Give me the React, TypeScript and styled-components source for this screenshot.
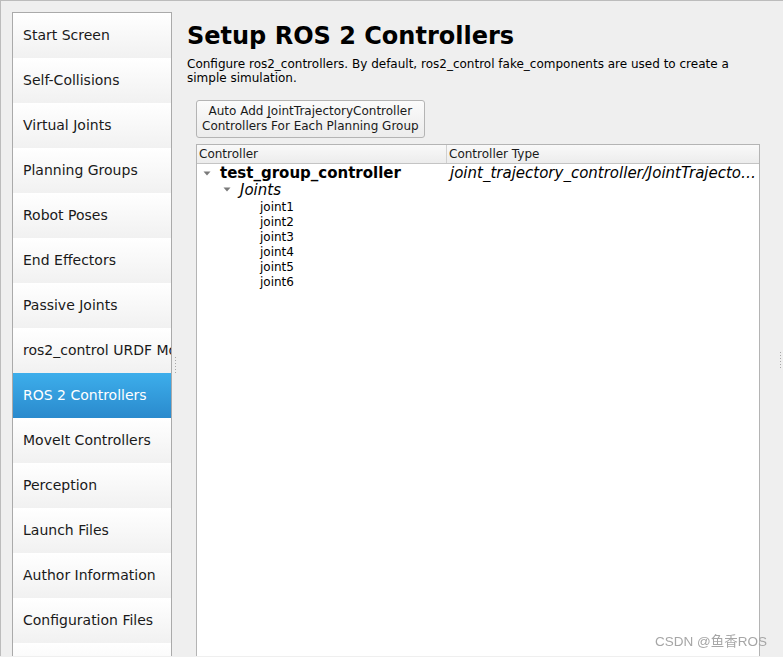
import styled, { createGlobalStyle } from "styled-components";

const GlobalStyle = createGlobalStyle`
  html, body {
    margin: 0;
    padding: 0;
    background: #efefef;
    font-family: "DejaVu Sans", "Noto Sans CJK SC", sans-serif;
    color: #000;
  }
  #root {
    height: 657px;
    overflow: hidden;
  }
`;

const NAV_ITEMS = [
  "Start Screen",
  "Self-Collisions",
  "Virtual Joints",
  "Planning Groups",
  "Robot Poses",
  "End Effectors",
  "Passive Joints",
  "ros2_control URDF Modifications",
  "ROS 2 Controllers",
  "MoveIt Controllers",
  "Perception",
  "Launch Files",
  "Author Information",
  "Configuration Files",
  "",
];

const JOINTS = ["joint1", "joint2", "joint3", "joint4", "joint5", "joint6"];

export default function App() {
  return (
    <>
      <GlobalStyle />
      <Window>
        <Sidebar>
          {NAV_ITEMS.map((item, i) => (
            <NavItem key={i} $active={item === "ROS 2 Controllers"}>
              {item}
            </NavItem>
          ))}
        </Sidebar>
        <Splitter>
          <Dots />
        </Splitter>
        <Main>
          <Title>Setup ROS 2 Controllers</Title>
          <Description>
            Configure ros2_controllers. By default, ros2_control fake_components are used to create a simple
            simulation.
          </Description>
          <AutoButton>
            Auto Add <u>J</u>ointTrajectoryController
            <br />
            Controllers For Each Planning Group
          </AutoButton>
          <Tree>
            <Header>
              <HeaderCell $first>Controller</HeaderCell>
              <HeaderCell>Controller Type</HeaderCell>
            </Header>
            <Row $height={16} $lift={3}>
              <NameCell $level={0}>
                <Arrow />
                <Bold>test_group_controller</Bold>
              </NameCell>
              <TypeCell>joint_trajectory_controller/JointTrajectoryController</TypeCell>
            </Row>
            <Row $height={20} $lift={1}>
              <NameCell $level={1}>
                <Arrow />
                <Italic>Joints</Italic>
              </NameCell>
            </Row>
            {JOINTS.map((joint) => (
              <Row key={joint} $height={15}>
                <NameCell $level={2}>
                  <Leaf>{joint}</Leaf>
                </NameCell>
              </Row>
            ))}
          </Tree>
        </Main>
        <EdgeSplitter>
          <Dots />
        </EdgeSplitter>
      </Window>
      <Watermark>CSDN @鱼香ROS</Watermark>
    </>
  );
}

function Arrow() {
  return (
    <ArrowBox>
      <svg width="8" height="5" viewBox="0 0 8 5">
        <path d="M0.5 0.5 L7.5 0.5 L4 4.5 Z" fill="#7a7a7a" />
      </svg>
    </ArrowBox>
  );
}

const Window = styled.div`
  display: flex;
  height: 656px;
  border-top: 1px solid #bcbcbc;
  border-left: 1px solid #bcbcbc;
  padding-left: 11px;
  box-sizing: border-box;
  overflow: hidden;
`;

const Sidebar = styled.div`
  flex: 0 0 158px;
  margin-top: 11px;
  display: flex;
  flex-direction: column;
  border: 1px solid #aaaaaa;
  border-bottom: none;
  background: #fff;
  overflow: hidden;
`;

const NavItem = styled.div<{ $active?: boolean }>`
  flex: 0 0 45px;
  display: flex;
  align-items: center;
  padding: 0 0 1px 10px;
  box-sizing: border-box;
  font-size: 14px;
  white-space: nowrap;
  overflow: hidden;
  color: ${(p) => (p.$active ? "#fff" : "#1a1a1a")};
  background: ${(p) =>
    p.$active ? "linear-gradient(#3daeeb, #2a8acd)" : "linear-gradient(#ffffff, #f1f1f1)"};
`;

const Splitter = styled.div`
  flex: 0 0 15px;
  display: flex;
  padding: 356px 0 0 3px;
  box-sizing: border-box;
`;

const EdgeSplitter = styled.div`
  flex: 0 0 5px;
  display: flex;
  justify-content: center;
  padding-top: 351px;
  box-sizing: border-box;
`;

const Dots = styled.div`
  width: 1px;
  height: 16px;
  background: repeating-linear-gradient(#a8a8a8 0 1px, transparent 1px 3px);
`;

const Main = styled.div`
  flex: 1;
  min-width: 0;
  padding-top: 20px;
  padding-right: 18px;
  display: flex;
  flex-direction: column;
`;

const Title = styled.h1`
  margin: 0;
  font-size: 24px;
  line-height: 30px;
  font-weight: bold;
`;

const Description = styled.p`
  margin: 6px 0 0;
  font-size: 12px;
  line-height: 14px;
`;

const AutoButton = styled.button`
  align-self: flex-start;
  margin: 15px 0 0 9px;
  padding: 3px 5px;
  font-family: inherit;
  font-size: 12px;
  line-height: 15px;
  color: #1a1a1a;
  background: linear-gradient(#fbfbfb, #ececec);
  border: 1px solid #b4b4b4;
  border-radius: 3px;

  u {
    text-decoration-thickness: 1px;
    text-underline-offset: 2px;
  }
`;

const Tree = styled.div`
  margin: 6px 0 0 9px;
  flex: 1;
  background: #fff;
  border: 1px solid #b4b4b4;
  border-bottom: none;
`;

const Header = styled.div`
  display: grid;
  grid-template-columns: 250px 1fr;
  height: 18px;
  background: linear-gradient(#f9f9f9, #ececec);
  border-bottom: 1px solid #c4c4c4;
`;

const HeaderCell = styled.div<{ $first?: boolean }>`
  display: flex;
  align-items: center;
  padding-left: 2px;
  font-size: 12px;
  color: #1a1a1a;
  border-right: ${(p) => (p.$first ? "1px solid #d0d0d0" : "none")};
`;

const Row = styled.div<{ $height: number; $lift?: number }>`
  display: grid;
  grid-template-columns: 250px 1fr;
  height: ${(p) => p.$height}px;
  padding-bottom: ${(p) => p.$lift ?? 0}px;
  box-sizing: border-box;
  align-items: center;
`;

const NameCell = styled.div<{ $level: number }>`
  display: flex;
  align-items: center;
  padding-left: ${(p) => 3 + p.$level * 20}px;
  white-space: nowrap;
`;

const ArrowBox = styled.span`
  flex: 0 0 20px;
  display: flex;
  align-items: center;
  padding-left: 3px;
  box-sizing: border-box;
`;

const Bold = styled.span`
  font-size: 15px;
  font-weight: bold;
`;

const Italic = styled.span`
  font-size: 15px;
  font-style: italic;
`;

const Leaf = styled.span`
  padding-left: 20px;
  font-size: 12px;
  line-height: 15px;
`;

const TypeCell = styled.div`
  padding: 0 0 0 3px;
  font-size: 15px;
  font-style: italic;
  white-space: nowrap;
  overflow: hidden;
  text-overflow: ellipsis;
`;

const Watermark = styled.div`
  position: fixed;
  left: 655px;
  top: 630px;
  font-family: "Liberation Sans", "Noto Sans CJK SC", sans-serif;
  font-size: 13.5px;
  color: #a6a6a6;
  white-space: nowrap;
`;
